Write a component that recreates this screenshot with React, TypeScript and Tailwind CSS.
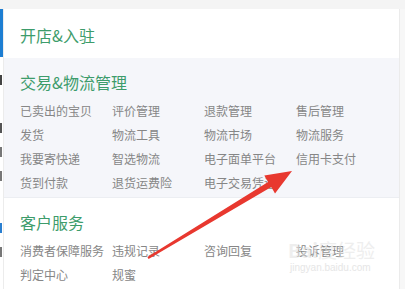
import React from "react";

const font = { fontFamily: '"Noto Sans CJK SC", "Noto Sans", sans-serif' };

const trade = [
  ["已卖出的宝贝", "评价管理", "退款管理", "售后管理"],
  ["发货", "物流工具", "物流市场", "物流服务"],
  ["我要寄快递", "智选物流", "电子面单平台", "信用卡支付"],
  ["货到付款", "退货运费险", "电子交易凭证", ""],
];

const service = [
  ["消费者保障服务", "违规记录", "咨询回复", "投诉管理"],
  ["判定中心", "规蜜", "", ""],
];

const Rows = ({ rows }: { rows: string[][] }) => (
  <div className="mt-[7px]">
    {rows.map((row, i) => (
      <div key={i} className="grid grid-cols-[92px_92px_92px_92px] h-[24px] items-center">
        {row.map((t, j) => (
          <span key={j} className="text-[12px] leading-[24px] text-[#868686] whitespace-nowrap">
            {t}
          </span>
        ))}
      </div>
    ))}
  </div>
);

const Title = ({ children }: { children: React.ReactNode }) => (
  <div className="text-[16px] leading-[20px] text-[#3d9c6b]">{children}</div>
);

const App = () => {
  return (
    <div className="relative w-[405px] h-[289px] overflow-hidden bg-[#f4f4f4]" style={font}>
      <div className="flex h-full pt-[9px]">
        {/* page behind the menu, cut off on the left */}
        <div className="w-[3px] flex flex-col bg-white">
          <div className="h-[48px] bg-[#1d7ed2]" />
          <div className="h-[18px]" />
          <div className="h-[10px] bg-[#444] w-[2px]" />
          <div className="h-[38px]" />
          <div className="h-[10px] bg-[#555] w-[2px]" />
          <div className="h-[14px]" />
          <div className="h-[10px] bg-[#777] w-[2px]" />
          <div className="h-[14px]" />
          <div className="h-[10px] bg-[#777] w-[2px]" />
          <div className="h-[42px]" />
          <div className="h-[10px] bg-[#2a7fd0] w-[2px]" />
          <div className="h-[14px]" />
          <div className="h-[10px] bg-[#777] w-[2px]" />
        </div>

        <div className="w-[396px] flex flex-col border-l border-[#ececec]">
          <div className="h-[49px] bg-white pt-[16px] pl-[16px]">
            <Title>开店&amp;入驻</Title>
          </div>
          <div className="h-[140px] bg-[#f5f6fa] pt-[14px] pl-[16px] border-b border-[#eceef2]">
            <Title>交易&amp;物流管理</Title>
            <Rows rows={trade} />
          </div>
          <div className="flex-1 bg-white pt-[14px] pl-[16px]">
            <Title>客户服务</Title>
            <Rows rows={service} />
          </div>
        </div>

        <div className="flex-1 bg-[#f7f7f7] border-l border-[#ebebeb]" />
      </div>

      {/* watermark */}
      <div className="absolute left-[288px] top-[239px] text-[19px] leading-[22px] font-bold text-[#e4e4e4] opacity-60 pointer-events-none">
        Bai<span className="font-normal">度经验</span>
      </div>
      <div className="absolute left-[290px] top-[262px] text-[10px] leading-[12px] text-[#e6e6e6] pointer-events-none" style={{ fontFamily: '"Liberation Sans", sans-serif' }}>
        jingyan.baidu.com
      </div>

      {/* red arrow */}
      <svg className="absolute left-0 top-0 pointer-events-none" width="405" height="289" viewBox="0 0 405 289">
        <polygon
          points="292,171 275,193.5 271.3,187.1 148.6,259 147.4,257 268.1,181.9 264.3,175.6"
          fill="#e8382f"
        />
      </svg>
    </div>
  );
};

export default App;
